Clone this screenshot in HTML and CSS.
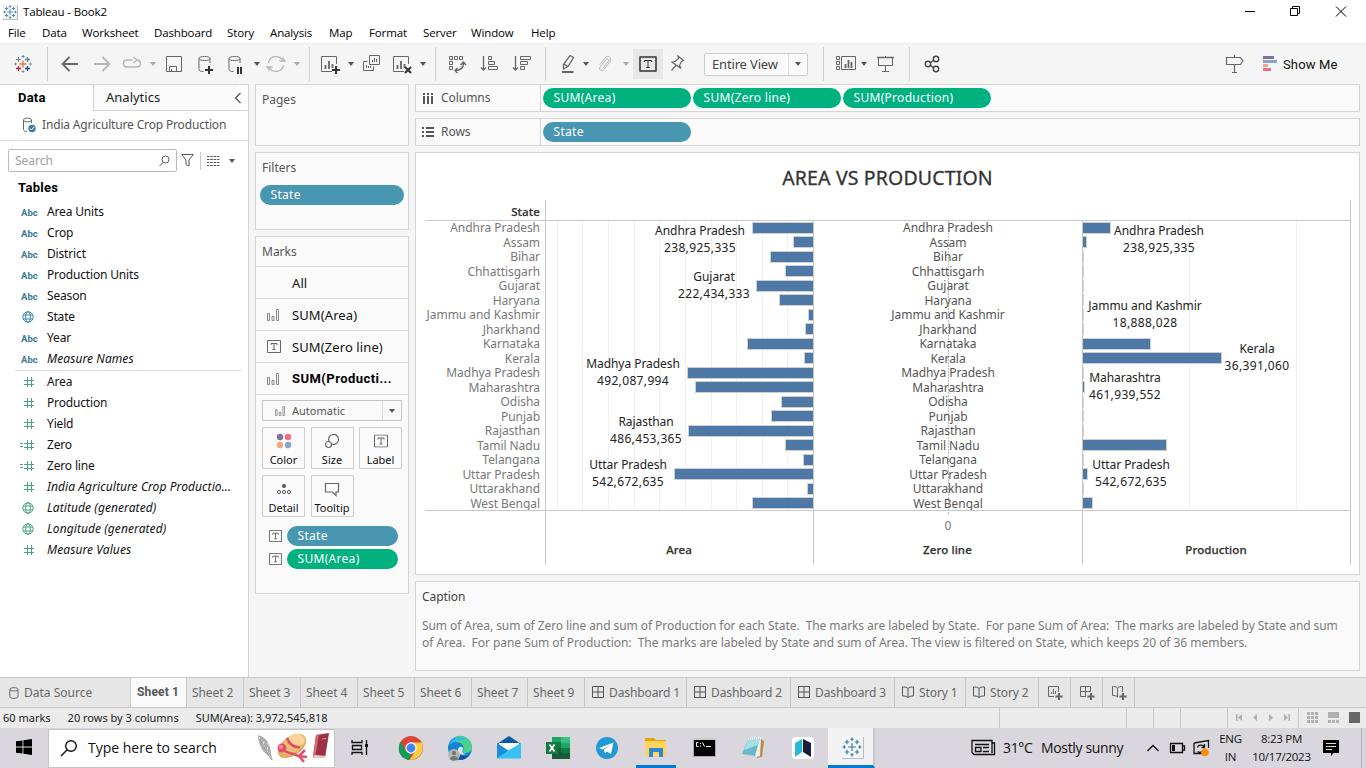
FILE: index.html
```html
<!DOCTYPE html>
<html lang="en">
<head>
<meta charset="utf-8">
<title>Tableau - Book2</title>
<link rel="stylesheet" href="styles.css">
</head>
<body>
<svg class="defs" width="0" height="0">
  <symbol id="db" viewBox="0 0 24 24"><path d="M16 11V6.5M16 6.5C16 5 13.300 4.500 10.500 4.500S5 5 5 6.500 7.700 8.500 10.500 8.500 16 8 16 6.500M5 6.500V17.500C5 19 7 19.500 9.500 19.500"/></symbol>
  <symbol id="sheet" viewBox="0 0 24 24"><path d="M14 19.500H3.500V4.500H18.500V12M7.500 13V17"/><path stroke-width="1.800" d="M7.500 13V17M11 9V17M14.500 12V16"/></symbol>
  <symbol id="bars" viewBox="0 0 12 12"><path d="M.5 4.500H2.500V11.500H.5ZM5 7.500H7V11.500H5ZM9.500 .5H11.500V11.500H9.500Z"/></symbol>
  <symbol id="tbox" viewBox="0 0 14 13"><path d="M.5 .5H13.500V12.500H.5ZM4 5V3.500H10V5M7 3.500V9.500M5.500 9.500H8.500"/></symbol>
  <symbol id="globe" viewBox="0 0 12 12"><circle cx="6" cy="6" r="5.200"/><ellipse cx="6" cy="6" rx="2.300" ry="5.200"/><path d="M1 4H11M1 8H11"/></symbol>
  <symbol id="hash" viewBox="0 0 16 12"><path d="M7.500 1V11M11.500 1V11M4 4.500H14M4 8.500H14"/></symbol>
  <symbol id="calc" viewBox="0 0 16 12"><path d="M7.500 1V11M11.500 1V11M4 4.500H14M4 8.500H14M0 4.500H3M0 7.500H3"/></symbol>
  <symbol id="dash" viewBox="0 0 12 12"><path d="M.5 .5H11.500V11.500H.5ZM6 .5V11.500M.5 6H11.500"/></symbol>
  <symbol id="story" viewBox="0 0 12 12"><path d="M6 2.500V11.500M6 2.500C4.500 1 2.500 1 .5 1V10C2.500 10 4.500 10 6 11.500 7.500 10 9.500 10 11.500 10V1C9.500 1 7.500 1 6 2.500"/></symbol>
  <symbol id="mark" viewBox="0 0 18 18"><path d="M9 5.500V12.500M5.500 9H12.500M9 .5V3.500M7.500 2H10.500M9 14.500V17.500M7.500 16H10.500M.5 9H3.500M2 7.500V10.500M14.500 9H17.500M16 7.500V10.500M4.500 2.500V6.500M2.500 4.500H6.500M13.500 2.500V6.500M11.500 4.500H15.500M4.500 11.500V15.500M2.500 13.500H6.500M13.500 11.500V15.500M11.500 13.500H15.500"/></symbol>
</svg>

<header class="titlebar">
  <svg class="app-icon" width="15" height="15"><rect width="15" height="15" fill="#f3f3f3"/><path d="M14.500 0V14.500H0" fill="none" stroke="#bbb"/><use href="#mark" x="0" y="0" width="14" height="14" stroke="#2c7aa3"/></svg>
  <span class="title">Tableau - Book2</span>
  <svg class="winctl" width="110" height="20" fill="none" stroke="#000"><path d="M5 10.500H15M50.500 7.500H57.500V14.500H50.500ZM52.500 7.500V5.500H59.500V12.500H57.500M96 5.500L106 15.500M106 5.500L96 15.500"/></svg>
</header>
<nav class="menubar"><span>File</span><span>Data</span><span>Worksheet</span><span>Dashboard</span><span>Story</span><span>Analysis</span><span>Map</span><span>Format</span><span>Server</span><span>Window</span><span>Help</span></nav>

<div class="toolbar">
  <svg class="ic" viewBox="0 0 24 24"><path stroke="#e8762c" stroke-width="1.300" d="M12 8.500V15.500M8.500 12H15.500"/><path stroke="#5b879b" d="M12 3V6M10.500 4.500H13.500M7.500 5V10M5 7.500H10"/><path stroke="#c72037" stroke-width="1.300" d="M7.500 14V19M5 16.500H10"/><path stroke="#59879b" stroke-width="1.300" d="M16.500 5V10M14 7.500H19"/><path stroke="#1f447e" stroke-width="1.300" d="M16.500 14V19M14 16.500H19"/><path stroke="#7199a6" d="M4.500 10.500V13.500M3 12H6M19.500 10.500V13.500M18 12H21M12 18V21M10.500 19.500H13.500"/></svg>
  <i class="sep"></i>
  <svg class="ic" viewBox="0 0 24 24"><path stroke-width="1.800" d="M20 12H5M11.500 5L4.500 12L11.500 19"/></svg>
  <svg class="ic off" viewBox="0 0 24 24"><path stroke-width="1.800" d="M4 12H19M12.500 5L19.500 12L12.500 19"/></svg>
  <svg class="ic off" viewBox="0 0 24 24"><path stroke-width="1.400" d="M12.500 8H6.500C2.500 8 2.500 15 6.500 15H17C21.500 15 21.500 8 17 8H15.500M13.500 5L17 8L13.500 11"/></svg>
  <i class="caret off"></i>
  <svg class="ic" viewBox="0 0 24 24"><path d="M4.500 4.500H19.500V19.500H4.500ZM7.500 19.500V14.500H14.500V19.500M9.500 19V17"/></svg>
  <svg class="ic" viewBox="0 0 24 24"><use href="#db"/><path stroke="#333" stroke-width="2" d="M15 14V22M11 18H19"/></svg>
  <svg class="ic" viewBox="0 0 24 24"><use href="#db"/><path stroke="#333" stroke-width="2" d="M14 15V22M17 15V22"/></svg>
  <i class="caret"></i>
  <svg class="ic off" viewBox="0 0 24 24"><path stroke-width="1.300" d="M4.500 11A7.500 7.500 0 0 1 18.500 8.500M19.500 13A7.500 7.500 0 0 1 5.500 15.500M15.500 9H21L18.500 5.500M8.500 15H3L5.500 18.500"/></svg>
  <i class="caret off"></i>
  <i class="sep"></i>
  <svg class="ic" viewBox="0 0 24 24"><use href="#sheet"/><path stroke="#333" stroke-width="2" d="M18 14V22M14 18H22"/></svg>
  <i class="caret"></i>
  <svg class="ic" viewBox="0 0 24 24"><path d="M10.500 3.500H20.500V12.500H10.500ZM13.500 8V10M15.500 6V10M17.500 7V10M8.500 9.500H4.500V18.500H14.500V14.500M7.500 13V16M9.500 14V16M11.500 14V16"/></svg>
  <svg class="ic" viewBox="0 0 24 24"><use href="#sheet"/><path stroke="#333" stroke-width="2" d="M15 15L21 21M21 15L15 21"/></svg>
  <i class="caret"></i>
  <i class="sep"></i>
  <svg class="ic" viewBox="0 0 24 24"><path d="M4.500 4.500H7.500V7.500H4.500ZM9.500 4.500H12.500V7.500H9.500ZM14.500 4.500H17.500V7.500H14.500ZM4.500 9.500H7.500V12.500H4.500ZM4.500 14.500H7.500V17.500H4.500Z"/><path stroke-width="1.400" d="M10 18.500C15 18.500 18.500 16 18.500 11M15.500 13L18.500 10L21 13M12.500 16L10 18.500L12.500 21"/></svg>
  <svg class="ic" viewBox="0 0 24 24"><path stroke-width="1.300" d="M5.500 4V18M3 15.500L5.500 18L8 15.500"/><path d="M10.500 4.500H13.500V7.500H10.500ZM10.500 9.500H16.500V12.500H10.500ZM10.500 14.500H19.500V17.500H10.500Z"/></svg>
  <svg class="ic" viewBox="0 0 24 24"><path stroke-width="1.300" d="M5.500 4V18M3 15.500L5.500 18L8 15.500"/><path d="M10.500 4.500H20.500V7.500H10.500ZM10.500 9.500H17.500V12.500H10.500ZM10.500 14.500H14.500V17.500H10.500Z"/></svg>
  <i class="sep"></i>
  <svg class="ic" viewBox="0 0 24 24"><path stroke-width="1.300" d="M14 3.500L17.500 5.500L12 14.500L7.500 17V12.500ZM8 12L12 14.500"/><path stroke-width="2" d="M6 20H17.500"/></svg>
  <i class="caret"></i>
  <svg class="ic off" viewBox="0 0 24 24"><path d="M7 12.500L12 6C14.500 3 19.500 5.500 17 9.500L11 17.500C9 20 5.500 18 7 15L13 7.500C14.500 6 16.500 7.500 15.500 9L10 16"/></svg>
  <i class="caret off"></i>
  <span class="tbtn"><svg width="18" height="16" fill="none" stroke="#333"><path stroke-width="1.500" d="M1 1H17V15H1Z"/><path d="M5.500 6V4.500H12.500V6M9 4.500V11.500M7 11.500H11"/></svg></span>
  <svg class="ic" viewBox="0 0 24 24"><path stroke-width="1.200" d="M13 4L18.500 8.500L16.500 9.500L14.500 13.500L16 16.500L7 10L10 9.500L13.500 6.500ZM11 13.500L6.500 18.500"/></svg>
  <div class="fit"><span>Entire View</span><b><i class="caret"></i></b></div>
  <i class="sep"></i>
  <svg class="ic" viewBox="0 0 24 24"><path d="M2.500 4.500H5.500V7.500H2.500ZM2.500 9.500H5.500V12.500H2.500ZM2.500 14.500H5.500V17.500H2.500ZM7.500 4.500H21.500V17.500H7.500Z"/><path stroke-width="1.800" d="M11.500 12V16M14.500 8V16M17.500 10V16"/></svg>
  <i class="caret"></i>
  <svg class="ic" viewBox="0 0 24 24"><path stroke-width="1.500" d="M4 5.500H21"/><path d="M5.500 6V13.500H19.500V6M12.500 4V5M12.500 14V19.500M9 19.500H16"/></svg>
  <i class="sep"></i>
  <svg class="ic dark" viewBox="0 0 24 24" stroke-width="1.400"><circle cx="8" cy="12" r="2.700"/><circle cx="16" cy="7" r="2.700"/><circle cx="16" cy="17" r="2.700"/><path d="M10.500 10.500L13.500 8.500M10.500 13.500L13.500 15.500"/></svg>
  <svg class="ic" viewBox="0 0 24 24"><path stroke-width="1.200" d="M4.500 5.500H18.500L21 9L18.500 12.500H4.500ZM12.500 3V5M12.500 13V20.500M10 20.500H15"/></svg>
  <svg width="16" height="16"><rect x="1" width="11" height="3" fill="#856f96"/><rect x="1" y="4" width="14" height="3" fill="#84a6cc"/><rect x="1" y="8" width="5" height="3" fill="#f2a77c"/><rect x="1" y="12" width="8" height="3" fill="#f26e7f"/></svg>
  <span class="showme">Show Me</span>
</div>

<main class="body">
  <aside class="data">
    <div class="dtabs"><span class="on">Data</span><span>Analytics</span><svg width="8" height="12" fill="none" stroke="#555" stroke-width="1.300"><path d="M6.500 1L1.500 6L6.500 11"/></svg></div>
    <div class="source"><svg width="15" height="16" viewBox="0 0 15 16" fill="none" stroke="#666"><path d="M10.500 6V3C10.500 .5 2.500 .5 2.500 3V12.500C2.500 14 4 14.500 6 14.500M2.500 3C2.500 5.500 10.500 5.500 10.500 3"/><circle cx="11" cy="11.500" r="3.700" fill="#3581a3" stroke="none"/><path stroke="#fff" d="M9 11.500L10.500 13L13 10"/></svg><span>India Agriculture Crop Production</span></div>
    <div class="find">
      <div class="search"><span>Search</span><svg width="11" height="12" fill="none" stroke="#555"><circle cx="6.500" cy="4.500" r="3.500"/><path d="M4 7.500L.5 11"/></svg></div>
      <svg width="13" height="13" fill="none" stroke="#555"><path d="M.7 .5H12.300L8 6V12L5 10.500V6Z"/></svg>
      <i></i>
      <svg width="13" height="10" fill="none" stroke="#555"><path stroke-dasharray="2.500 .8" d="M0 .5H13M0 3.500H13M0 6.500H13M0 9.500H13"/></svg>
      <i class="caret"></i>
    </div>
    <h2>Tables</h2>
    <ul class="fields" id="dimensions"></ul>
    <hr>
    <ul class="fields" id="measures"></ul>
  </aside>

  <section class="cards">
    <div class="card pages"><h3>Pages</h3></div>
    <div class="card filters"><h3>Filters</h3><span class="pill blue">State</span></div>
    <div class="card marks">
      <h3>Marks</h3>
      <div class="mrow"><i></i><span>All</span></div>
      <div class="mrow"><svg class="mi" width="12" height="12"><use href="#bars"/></svg><span>SUM(Area)</span></div>
      <div class="mrow"><svg class="mi dk" width="14" height="13"><use href="#tbox"/></svg><span>SUM(Zero line)</span></div>
      <div class="mrow cur"><svg class="mi" width="12" height="12"><use href="#bars"/></svg><span>SUM(Producti...</span></div>
      <div class="mtype"><svg class="mi" width="10" height="10"><use href="#bars"/></svg><span>Automatic</span><b><i class="caret"></i></b></div>
      <div class="btns">
        <div><svg width="16" height="16"><circle cx="4" cy="4" r="3.200" fill="#856f96"/><circle cx="12" cy="4" r="3.200" fill="#f26e7f"/><circle cx="4" cy="12" r="3.200" fill="#f2a77c"/><circle cx="12" cy="12" r="3.200" fill="#84a6cc"/></svg>Color</div>
        <div><svg width="16" height="16" fill="none" stroke="#666" stroke-width="1.200"><path d="M5 8.500A5 5 0 1 1 8 11.200"/><circle cx="4.500" cy="11.500" r="3"/></svg>Size</div>
        <div><svg width="14" height="16" fill="none" stroke="#666"><use href="#tbox" y="1.500" width="14" height="13"/></svg>Label</div>
        <div><svg width="16" height="16" fill="none" stroke="#555"><circle cx="8" cy="5" r="2" fill="#555" stroke="none"/><circle cx="3" cy="11" r="1.600"/><circle cx="8" cy="11" r="1.600"/><circle cx="13" cy="11" r="1.600"/></svg>Detail</div>
        <div><svg width="16" height="16" fill="none" stroke="#666" stroke-width="1.200"><path d="M1.500 2.500H14.500V11H12V14.500L8.500 11H1.500Z"/></svg>Tooltip</div>
      </div>
      <div class="enc"><svg class="mi dk" width="13" height="12"><use href="#tbox"/></svg><span class="pill blue">State</span></div>
      <div class="enc"><svg class="mi dk" width="13" height="12"><use href="#tbox"/></svg><span class="pill green">SUM(Area)</span></div>
    </div>
  </section>

  <section class="work">
    <div class="shelf"><div class="sl"><svg width="12" height="13" fill="#555"><path d="M1 4H3V12H1ZM5 4H7V12H5ZM9 4H11V12H9ZM1 1H3V3H1ZM5 1H7V3H5ZM9 1H11V3H9Z"/></svg>Columns</div><span class="pill green">SUM(Area)</span><span class="pill green">SUM(Zero line)</span><span class="pill green">SUM(Production)</span></div>
    <div class="shelf"><div class="sl"><svg width="12" height="13" fill="#555"><path d="M0 1H2V3H0ZM4 1H12V3H4ZM0 5H2V7H0ZM4 5H12V7H4ZM0 9H2V11H0ZM4 9H12V11H4Z"/></svg>Rows</div><span class="pill blue">State</span></div>
    <div class="view"><svg id="chart" width="943" height="421" viewBox="416 153 943 421"></svg></div>
    <div class="caption"><h3>Caption</h3><p>Sum of Area, sum of Zero line and sum of Production for each State.&nbsp; The marks are labeled by State.&nbsp; For pane Sum of Area:&nbsp; The marks are labeled by State and sum</p><p class="last">of Area.&nbsp; For pane Sum of Production:&nbsp; The marks are labeled by State and sum of Area. The view is filtered on State, which keeps 20 of 36 members.</p></div>
  </section>
</main>

<nav class="sheets">
  <span class="ds"><svg width="10" height="12" fill="none" stroke="#666"><path d="M.8 2.500C.8 0 9 0 9 2.500V9.500C9 12 .8 12 .8 9.500ZM.8 2.500C.8 4.500 9 4.500 9 2.500"/></svg>Data Source</span>
  <span class="on">Sheet 1</span><span>Sheet 2</span><span>Sheet 3</span><span>Sheet 4</span><span>Sheet 5</span><span>Sheet 6</span><span>Sheet 7</span><span>Sheet 9</span>
  <span><svg class="ti"><use href="#dash"/></svg>Dashboard 1</span><span><svg class="ti"><use href="#dash"/></svg>Dashboard 2</span><span><svg class="ti"><use href="#dash"/></svg>Dashboard 3</span>
  <span><svg class="ti"><use href="#story"/></svg>Story 1</span><span><svg class="ti"><use href="#story"/></svg>Story 2</span>
  <span class="new"><svg width="16" height="16" fill="none" stroke="#666"><path d="M7 11.500H1.500V1.500H11.500V7M4.500 7V9M6.500 4V9M8.500 6V9"/><path stroke-width="2" d="M12 8V15M8.500 11.500H15.500"/></svg></span>
  <span class="new"><svg width="16" height="16" fill="none" stroke="#666"><path d="M7 11.500H1.500V1.500H11.500V7M1.500 6.500H11.500M6.500 1.500V11.500"/><path stroke-width="2" d="M12 8V15M8.500 11.500H15.500"/></svg></span>
  <span class="new"><svg width="16" height="16" fill="none" stroke="#666"><path d="M6.500 3C5 1.500 3 1.500 1.500 1.500V10.500C3 10.500 5 10.500 6.500 12V3C8 1.500 10 1.500 11.500 1.500V7"/><path stroke-width="2" d="M12 8V15M8.500 11.500H15.500"/></svg></span>
</nav>
<div class="status"><span>60 marks</span><span>20 rows by 3 columns</span><span>SUM(Area): 3,972,545,818</span>
  <svg width="367" height="20"><path stroke="#c8c8c8" d="M.5 0V20M127.500 0V20M154.500 0V20M181.500 0V20M228.500 0V20M299.500 0V20"/><path fill="#b0b0b0" d="M237 6H238.500V13H237ZM243 6V13L239 9.500ZM258 6V13L254 9.500ZM270 6V13L274 9.500ZM285 6V13L289 9.500ZM289.500 6H291V13H289.500ZM308 4H311V7H308ZM312 4H315V7H312ZM316 4H319V7H316ZM308 8H311V11H308ZM312 8H315V11H312ZM316 8H319V11H316ZM308 12H311V15H308ZM312 12H315V15H312ZM316 12H319V15H316ZM329 4H340V10H329ZM329 12H332V15H329ZM333 12H336V15H333ZM337 12H340V15H337Z"/><rect x="350" y="4" width="11" height="11" fill="#666"/></svg>
</div>

<footer class="taskbar">
  <svg class="t" viewBox="0 0 28 28"><path fill="#000" d="M6 7.300L12.500 6.400V12.600H6ZM13.400 6.200L22 5V12.600H13.400ZM6 13.400H12.500V19.600L6 18.700ZM13.400 13.400H22V21L13.400 19.800Z"/></svg>
  <div class="tsearch"><svg width="18" height="18" fill="none" stroke="#111" stroke-width="1.400"><circle cx="11" cy="7" r="5.300"/><path d="M7.200 10.800L1 17"/></svg><span>Type here to search</span>
    <svg width="76" height="36" viewBox="0 0 76 36"><path fill="#aaa" d="M2 5C10 7 15 14 15 24L17 31L13 26C6 22 2 13 2 5Z"/><path stroke="#eee" fill="none" d="M3 7L15 28M8 11L7 17M12 17L10 22M11 13L15 18"/><path stroke="#777" fill="none" stroke-width=".7" d="M4 9L15.500 30"/><ellipse cx="36" cy="16" rx="16" ry="9.500" fill="#e6ad60" transform="rotate(-35 36 16)"/><ellipse cx="37" cy="14" rx="14" ry="8" fill="#f0bf7b" transform="rotate(-35 37 14)"/><path fill="#f8d498" d="M32 9C34 2 45 2 48 9C50 13 45 16 40 15C35 14 32 12 32 9Z"/><path fill="none" stroke="#dc4e66" stroke-width="2.500" d="M31 8C33 14 38 18 44 17"/><circle cx="26" cy="18" r="4.500" fill="#e44e6b"/><circle cx="25" cy="17" r="2" fill="#f691a1"/><path fill="none" stroke="#de506e" stroke-width="2.500" d="M29 21C33 24 38 23 42 26L51 27M49 20L43 26L48 32"/><path fill="#9d3043" d="M60 5L73 3L69 28L57 27Z"/><path fill="#d76777" d="M60 5L63 4.500L59 28L57 27Z"/><path fill="#eed9c9" d="M57 27L69 28L70 26L59 25Z"/><path stroke="#dc9aa3" d="M66 9L70 8.500"/></svg></div>
  <svg class="t" viewBox="0 0 28 28" fill="none" stroke="#111" stroke-width="1.300"><path d="M6 6V8.500H16V6M6 21V18.500H16V21M6.500 11.500H15.500V15.500H6.500ZM20.500 6V21"/><path stroke-width="3" d="M19 11.500H22"/></svg>
  <svg class="t" viewBox="0 0 28 28"><circle cx="14" cy="14" r="12" fill="#db4437"/><path fill="#0f9d58" d="M3.600 8L9 17.500L14 19L12.500 26C2 25 -.5 14.500 3.600 8Z"/><path fill="#ffcd40" d="M14 8.500H24.700C28.500 17 22 26.500 12.500 26L18.500 17Z"/><circle cx="14" cy="14" r="5.700" fill="#fff"/><circle cx="14" cy="14" r="4.400" fill="#4285f4"/></svg>
  <svg class="t" viewBox="0 0 28 28"><circle cx="14" cy="14" r="12" fill="#1684d3"/><path fill="#4bd18a" d="M9 3C18-1 27 6 26 15C24 20 17 20 16 17C20 13 16 8 10 8Z"/><path fill="#35bce6" d="M3 11C7 2 16 1 21 6C16 5 8 7 3 11Z"/><path fill="#164e9f" d="M10 13C9 21 17 23 23 21C19 27 11 27 8 23Z"/><path fill="#d9eaf0" d="M12 15C13 12 17 12 17 15C15 17 17 20 20 20C15 22 11 19 12 15Z"/><circle cx="8" cy="21" r="6" fill="#b9b7b5"/><circle cx="8" cy="19" r="2.200" fill="#777"/><path fill="#777" d="M4 25C4 21 12 21 12 25C10 27 6 27 4 25Z"/></svg>
  <svg class="t" viewBox="0 0 28 28"><path fill="#0c59a4" d="M2 10L14 2L26 10V17H2Z"/><path fill="#fff" d="M4 9H24V17H4Z"/><path fill="#1b8ede" d="M2 9L14 17L2 24.500Z"/><path fill="#38c1f2" d="M26 9V24.500H2L14 16Z"/></svg>
  <svg class="t" viewBox="0 0 28 28"><path fill="#21a366" d="M8 3H26V25H8Z"/><path fill="#33c481" d="M17 3H26V9H17Z"/><path fill="#185c37" d="M8 14H17V25H8Z"/><path fill="#107c41" d="M8 8H17V14H8ZM17 14H26V19H17Z"/><path fill="#185c37" d="M17 19H26V25H17Z"/><rect x="2" y="8" width="12" height="12" fill="#107c41"/><path stroke="#fff" stroke-width="1.800" d="M5.500 10.500L10.500 17.500M10.500 10.500L5.500 17.500"/></svg>
  <svg class="t" viewBox="0 0 28 28"><circle cx="14" cy="14" r="11" fill="#2399d3"/><path fill="#fff" d="M6 14L20.500 8.500L18 20L14 17.500L12 19.500L11 15.500L18 10.500L9.500 15.500Z"/></svg>
  <div class="tc run"><svg class="t" viewBox="0 0 28 28"><path fill="#e6a10b" d="M3 5H12L14 7H24V12H3Z"/><path fill="#ffd55c" d="M3 8H24V23H3Z"/><path fill="#2f86d2" d="M7 15H21V24H17V19H11V24H7Z"/></svg></div>
  <svg class="t" viewBox="0 0 28 28"><rect x="3.500" y="4.500" width="22" height="18" fill="#050505" stroke="#a9a9a9"/><path fill="#ccc" d="M3 4H26V6H3Z"/><path stroke="#fff" fill="none" d="M8.500 8.500H6.500V12.500H8.500M10.500 9V10M10.500 11.500V12.500M12.500 8.500L14.500 12.500M16 12.500H21"/></svg>
  <svg class="t" viewBox="0 0 28 28"><path fill="#b88d42" d="M20 4L25 7L23 23L18 24Z"/><path fill="#eee" d="M9 5L22 4L21 22L17 23Z"/><path fill="#68b9c9" d="M9 5L21 4L16 22L3 20Z"/><path fill="#a8dde3" d="M9 5L21 4L19 11L5 16Z"/><path stroke="#fff" stroke-dasharray="1 1" stroke-width="2" d="M9 5L22 4"/></svg>
  <svg class="t" viewBox="0 0 28 28"><rect x="3" y="3" width="22" height="22" rx="4" fill="#fff"/><path fill="#27b8d3" d="M6 9L13 5V18L6 23Z"/><path fill="#182039" d="M14 5L22 9V23L14 18Z"/></svg>
  <div class="tc act"><svg class="t" viewBox="0 0 28 28"><path fill="#f5f5f5" d="M3 3H25V25H3Z"/><path fill="none" stroke="#bbb" d="M25.500 4V25.500H4"/><use href="#mark" x="4" y="4" width="20" height="20" fill="none" stroke="#3276a4"/></svg></div>
  <svg width="25" height="18" fill="none" stroke="#111" stroke-width="1.300"><path d="M1 1.500H21V4H23.500V15.500H3L1 13.500ZM21 4V14M4 5.500H18"/><path d="M4.500 8.500H10V12.500H4.500ZM12 8.500H18M12 12.500H18"/></svg>
  <span class="w">31°C</span><span class="w">Mostly sunny</span>
  <svg width="14" height="10" fill="none" stroke="#111" stroke-width="1.300"><path d="M1.500 8L7 2.500L12.500 8"/></svg>
  <svg width="18" height="12" fill="none" stroke="#111" stroke-width="1.300"><path d="M1.500 1.500H13.500V10.500H1.500ZM14 4H15.500V8H14"/><rect x="3" y="3" width="3" height="6" fill="#111" stroke="none"/></svg>
  <svg width="20" height="18" fill="none" stroke="#111" stroke-width="1.300"><path d="M2 4L16.500 1.500V9M10 14.500H2V4M5.500 8.500C6 5.500 11 5.500 12 8M12.500 5V8.500H9.500M5.500 12.500C7 13.500 9 13.500 10 12"/><circle cx="13" cy="13.500" r="3.800" fill="#ff8f00" stroke="none"/></svg>
  <span class="two">ENG<br>IN</span><span class="two clock">8:23 PM<br>10/17/2023</span>
  <svg class="t" viewBox="0 0 28 28"><path fill="#000" d="M3 6H19V19H13.500L11 22V19H3Z"/><path stroke="#ddd" d="M6 9.500H16M6 12.500H16M6 15.500H12"/></svg>
  <i class="peek"></i>
</footer>
<script src="script.js"></script>
</body>
</html>
```
FILE: styles.css
```css
* { box-sizing: border-box; }
body { margin: 0; width: 1366px; height: 768px; overflow: hidden; background: #f5f5f5; color: #222; font: 12px/16px "Noto Sans", sans-serif; letter-spacing: -.16px; display: flex; flex-direction: column; }
h2, h3, p, ul { margin: 0; padding: 0; font-weight: normal; font-size: 12px; list-style: none; }
svg { display: block; flex: none; }
.defs { position: absolute; }
.caret { display: block; width: 0; height: 0; border: 3px solid transparent; border-top: 4px solid #555; border-bottom: 0; }
.caret.off { border-top-color: #aaa; }

.titlebar { height: 22px; background: #fff; display: flex; align-items: center; padding: 2px 17px 0 3px; font-family: "Open Sans", sans-serif; font-size: 11.5px; letter-spacing: -.15px; color: #000; }
.titlebar .app-icon { fill: none; }
.title { margin-left: 5px; flex: 1; }
.winctl { margin-top: -3px; margin-right: -1px; }
.menubar { height: 21px; padding-top: 1px; background: #fff; display: grid; grid-template-columns: 34px 40px 72px 73px 43px 59px 40px 54px 48px 60px auto; padding-left: 8px; align-items: center; font-family: "Open Sans", sans-serif; font-size: 11.5px; letter-spacing: -.14px; color: #000; }

.toolbar { height: 41px; border-top: 1px solid #eee; padding-left: 11px; display: grid; align-items: center; grid-template-columns: 36px 11px 32px 30px 28px 14px 32px 30px 28px 12px 28px 17px 9px 28px 13px 31px 28px 17px 10px 33px 32px 35px 11px 25px 12px 28px 12px 32px 39px 119px 11px 25px 14px 36px 11px 302px 40px 21px auto; }
.toolbar .ic { width: 24px; height: 24px; fill: none; stroke: #666; }
.toolbar .off { stroke: #b5b5b5; }
.toolbar .dark { stroke: #444; }
.toolbar > .caret { margin-left: 1.5px; }
.sep { display: block; width: 1px; height: 34px; background: #d0d0d0; }
.tbtn { width: 30px; height: 30px; background: #e6e6e6; display: flex; align-items: center; justify-content: center; }
.fit { width: 104px; height: 23px; border: 1px solid #ccc; border-radius: 2px; background: #fafafa; display: flex; font-size: 13px; color: #444; line-height: 20px; padding-left: 7px; }
.fit span { flex: 1; }
.fit b, .mtype b { width: 19px; border-left: 1px solid #ddd; display: flex; align-items: center; justify-content: center; }
.fit .caret { border-width: 4px 3.5px 0; }
.showme { font: 13px Roboto, sans-serif; letter-spacing: .15px; color: #111; }

.body { height: 593px; display: flex; }
.data { width: 249px; background: #fff; border-right: 1px solid #d4d4d4; border-top: 1px solid #d4d4d4; }
.dtabs { height: 26px; display: flex; font-size: 13px; line-height: 25px; align-items: center; color: #222; letter-spacing: 0; position: relative; }
.dtabs span { width: 144px; padding-left: 12px; background: #fafafa; border-left: 1px solid #d4d4d4; border-bottom: 1px solid #d4d4d4; height: 26px; }
.dtabs .on { width: 93px; background: #fff; border: 0; padding-left: 18px; font-family: Roboto, sans-serif; font-weight: bold; letter-spacing: .2px; color: #000; }
.dtabs svg { margin-left: -3px; position: relative; }
.dtabs::after { content: ""; position: absolute; right: 0; bottom: 0; width: 11px; height: 1px; background: #d4d4d4; }
.source { height: 30px; padding-bottom: 1px; border-bottom: 1px solid #ddd; display: flex; align-items: center; padding-left: 21px; gap: 6px; color: #555; }
.find { padding: 8px 0 0 8px; display: flex; align-items: center; color: #a0a0a0; }
.search { width: 169px; height: 23px; border: 1px solid #bbb; border-radius: 2px; padding: 0 6px; display: flex; align-items: center; justify-content: space-between; margin-right: 4px; letter-spacing: 0; }
.find > i:not(.caret) { width: 1px; height: 18px; background: #ccc; margin: 0 6px; }
.find .caret { margin-left: 9px; border-width: 4px 3.5px 0; }
.data h2 { font: bold 13px/16px Roboto, sans-serif; letter-spacing: .3px; color: #000; padding: 8px 0 0 18px; height: 29px; }
.fields li { height: 21px; display: grid; grid-template-columns: 27px auto; padding-left: 20px; align-items: center; color: #111; }
.fields .abc { color: #3a7a94; font: bold 9.5px Roboto, sans-serif; letter-spacing: 0; padding: 1px 0 0 1px; }
.fields svg { fill: none; stroke: #4aa580; }
.fields .dim { stroke: #3c87a5; }
.fields svg.g { margin-left: 2px; }
.fields .it { font-style: italic; letter-spacing: .08px; }
.data hr { border: 0; height: 1px; background: #ddd; margin: 1px 6px 0 15px; }

.cards { width: 160px; padding-left: 6px; display: flex; flex-direction: column; gap: 6px; }
.card { background: #fafafa; border: 1px solid #d4d4d4; width: 154px; color: #555; }
.card h3 { padding: 7px 6px; height: 29px; letter-spacing: 0; }
.pages { height: 62px; }
.filters { height: 78px; padding: 0 4px; }
.filters h3 { padding-left: 2px; height: 32px; }
.marks { height: 358px; }
.pill { display: block; height: 20px; border-radius: 10px; color: #fff; line-height: 20px; padding-left: 10.5px; width: 148px; letter-spacing: .3px; }
.blue { background: #4996b2; }
.green { background: #00b180; }
.filters .pill { width: 144px; }
.mi { fill: none; stroke: #888; }
.mi.dk { stroke: #666; }
.mrow { height: 32px; border-top: 1px solid #ddd; padding-left: 11px; display: grid; grid-template-columns: 25px auto; align-items: center; font-size: 13px; color: #111; letter-spacing: .1px; }
.mrow.cur { font-family: Roboto, sans-serif; font-weight: bold; color: #000; letter-spacing: .45px; border-bottom: 1px solid #ddd; height: 33px; }
.mtype { margin: 5px 6px 0; height: 21px; border: 1px solid #c4c4c4; border-radius: 1px; width: 140px; display: flex; align-items: center; padding-left: 12px; font-size: 11px; }
.mtype span { flex: 1; padding-left: 7px; letter-spacing: 0; }
.mtype b { height: 19px; }
.mtype .caret { border-width: 4px 3.5px 0; }
.btns { margin: 6px 6px 0; display: grid; grid-template-columns: repeat(3, 43px); gap: 6px 5.5px; }
.btns div { height: 42px; border: 1px solid #d0d0d0; display: flex; flex-direction: column; align-items: center; padding-top: 5px; gap: 3px; font-size: 11px; letter-spacing: 0; color: #111; }
.enc { display: flex; align-items: center; padding-left: 13px; gap: 5px; margin-top: 3px; }
.enc .pill { width: 111px; }
.btns + .enc { margin-top: 9px; }

.work { width: 945px; margin-left: 6px; display: flex; flex-direction: column; gap: 6px; }
.shelf { height: 28px; border: 1px solid #d4d4d4; background: #fafafa; display: flex; align-items: center; gap: 2px; color: #555; }
.sl { width: 125px; height: 26px; border-right: 1px solid #d4d4d4; display: flex; align-items: center; padding-left: 6px; gap: 7px; letter-spacing: -.05px; }
.view { height: 423px; background: #fff; border: 1px solid #d4d4d4; }
.caption { height: 90px; border: 1px solid #d4d4d4; background: #fafafa; padding: 6px; letter-spacing: -.07px; color: #7b7b7b; line-height: 17.5px; white-space: nowrap; }
.caption h3 { color: #444; margin-bottom: 11px; }
.caption .last { letter-spacing: -.035px; }
#chart { font: 12px "Noto Sans", sans-serif; letter-spacing: -.05px; }
#chart .title { font-size: 19.5px; fill: #333; stroke: #333; stroke-width: .3px; letter-spacing: .15px; }
#chart .head { font-weight: 500; fill: #333; stroke: #333; stroke-width: .25px; font-size: 11.5px; letter-spacing: .1px; }
#chart .row { fill: #787878; }
#chart .mid { fill: #555; }
#chart .mark { fill: #222; }
#chart .num { letter-spacing: .35px; }
#chart .grid { stroke: #f0f0f0; }
#chart .rule { stroke: #c8c8c8; }
#chart .zero { stroke: #bbb; stroke-dasharray: 2 1; }
#chart .bar { fill: #4e79a7; stroke: #d0d0d0; }

.sheets { height: 31px; border: 1px solid #c8c8c8; border-width: 1px 0; background: #e6e6e6; display: grid; grid-template-columns: 131px 56px repeat(5, 57px) 56px 57px 102px 104px 104px 71px 73px 32px 32px 32px; color: #666; }
.sheets span { border-right: 1px solid #c8c8c8; display: flex; align-items: center; padding-left: 5px; letter-spacing: -.1px; white-space: nowrap; }
.sheets .on { background: #fafafa; font-family: Roboto, sans-serif; font-weight: bold; letter-spacing: .15px; color: #555; padding: 0 0 1px 6px; }
.sheets .ds { padding-left: 9px; gap: 5px; letter-spacing: 0; }
.sheets .ti { width: 12px; height: 12px; fill: none; stroke: #555; margin: 0 5px 1px 2px; }
.sheets .new { padding-left: 8px; }
.status { height: 20px; background: #ebebeb; padding-left: 3px; display: flex; align-items: center; font-size: 11px; color: #222; letter-spacing: 0; gap: 17px; }
.status svg { margin-left: auto; }

.taskbar { height: 40px; background: #d9d7dd; display: grid; align-items: center; padding-left: 10px; grid-template-columns: 38px 298px 51px 49px 49px 49px 49px 43px 54px 49px 50px 39px 143px 32px 38px 105px 23px 23px 26px 25px 77px 41px auto; font-family: "Open Sans", sans-serif; color: #111; letter-spacing: 0; }
.taskbar .t { width: 28px; height: 28px; }
.tsearch { width: 287px; height: 39px; background: #fff; border: 1px solid #c3c1c6; display: flex; align-items: center; padding: 0 2px 0 11px; font-size: 14px; }
.tsearch span { padding-left: 10px; flex: 1; }
.tc { height: 40px; display: flex; align-items: center; padding-left: 6px; width: 40px; border-bottom: 3px solid #0078d4; }
.act { width: 47px; background: #f2f1f4; padding-left: 10px; border-right: 2px solid #c4cad2; }
.w { font-size: 14px; letter-spacing: -.35px; white-space: nowrap; }
.two { font-size: 11.5px; line-height: 18px; text-align: center; letter-spacing: -.25px; }
.peek { width: 1px; height: 40px; background: #b0afb4; }
```
FILE: script.js
```js
const dimensions = [['Area Units', 'abc'], ['Crop', 'abc'], ['District', 'abc'], ['Production Units', 'abc'], ['Season', 'abc'], ['State', 'globe'], ['Year', 'abc'], ['Measure Names', 'abc', 1]];
const measures = [['Area', 'hash'], ['Production', 'hash'], ['Yield', 'hash'], ['Zero', 'calc'], ['Zero line', 'calc'], ['India Agriculture Crop Productio...', 'hash', 1], ['Latitude (generated)', 'globe', 1], ['Longitude (generated)', 'globe', 1], ['Measure Values', 'hash', 1]];

function fieldList(id, fields, cls) {
  document.getElementById(id).innerHTML = fields.map(([name, icon, italic]) => {
    let mark = '<span class="abc">Abc</span>';
    if (icon === 'globe') mark = `<svg class="g ${cls}" width="12" height="12"><use href="#globe"/></svg>`;
    else if (icon !== 'abc') mark = `<svg width="16" height="12"><use href="#${icon}"/></svg>`;
    return `<li>${mark}<span class="${italic ? 'it' : ''}">${name}</span></li>`;
  }).join('');
}
fieldList('dimensions', dimensions, 'dim');
fieldList('measures', measures, 'mea');

// State, left end of the Area bar, right end of the Production bar.
const rows = [
  ['Andhra Pradesh', 752, 1110], ['Assam', 793, 1086], ['Bihar', 770, 1083], ['Chhattisgarh', 785, 1083],
  ['Gujarat', 756, 1083], ['Haryana', 779, 1083], ['Jammu and Kashmir', 808, 1083], ['Jharkhand', 805, 1083],
  ['Karnataka', 747, 1150], ['Kerala', 804, 1221], ['Madhya Pradesh', 687, 1083], ['Maharashtra', 695, 1084],
  ['Odisha', 781, 1083], ['Punjab', 771, 1083], ['Rajasthan', 688, 1083], ['Tamil Nadu', 785, 1166],
  ['Telangana', 803, 1083], ['Uttar Pradesh', 674, 1087], ['Uttarakhand', 807, 1083], ['West Bengal', 752, 1092]
];
const labels = [
  [700, 235, 'Andhra Pradesh', '238,925,335'], [714, 281, 'Gujarat', '222,434,333'],
  [633, 368, 'Madhya Pradesh', '492,087,994'], [646, 426, 'Rajasthan', '486,453,365'],
  [628, 469, 'Uttar Pradesh', '542,672,635'], [1159, 235, 'Andhra Pradesh', '238,925,335'],
  [1145, 310, 'Jammu and Kashmir', '18,888,028'], [1257, 353, 'Kerala', '36,391,060'],
  [1125, 382, 'Maharashtra', '461,939,552'], [1131, 469, 'Uttar Pradesh', '542,672,635']
];
const text = (x, y, s, cls, anchor = 'middle') => `<text x="${x}" y="${y}" class="${cls}" text-anchor="${anchor}">${s}</text>`;
const vline = (x, y1, y2, cls) => `<path class="${cls}" d="M${x + .5} ${y1}V${y2}"/>`;

let out = text(887.5, 185, 'AREA VS PRODUCTION', 'title') + text(540, 216, 'State', 'head', 'end');
[557, 582, 608, 634, 659, 685, 711, 736, 762, 787, 1189, 1296].forEach(x => out += vline(x, 221, 510, 'grid'));
out += vline(948, 221, 514, 'zero');
rows.forEach(([name, left, right], i) => {
  const y = 222.5 + Math.floor(14.5 * i);
  const base = 232 + Math.round(14.5 * i);
  out += `<rect class="bar" x="${left + .5}" y="${y}" width="${813 - left}" height="11"/>`;
  out += `<rect class="bar" x="1082.5" y="${y}" width="${right - 1082}" height="11"/>`;
  out += text(540, base, name, 'row', 'end') + text(948, base, name, 'mid');
});
labels.forEach(([x, y, name, value]) => out += text(x, y, name, 'mark') + text(x, y + 17, value, 'mark num'));
out += '<path class="rule" d="M425 220.500H1351M425 510.500H1351"/>';
out += vline(545, 200, 565, 'rule') + vline(813, 220, 565, 'rule') + vline(1082, 220, 565, 'rule') + vline(1350, 200, 565, 'rule');
out += text(948, 530, '0', 'row') + text(679, 554, 'Area', 'head') + text(947.5, 554, 'Zero line', 'head') + text(1216, 554, 'Production', 'head');
document.getElementById('chart').innerHTML = out;
```
